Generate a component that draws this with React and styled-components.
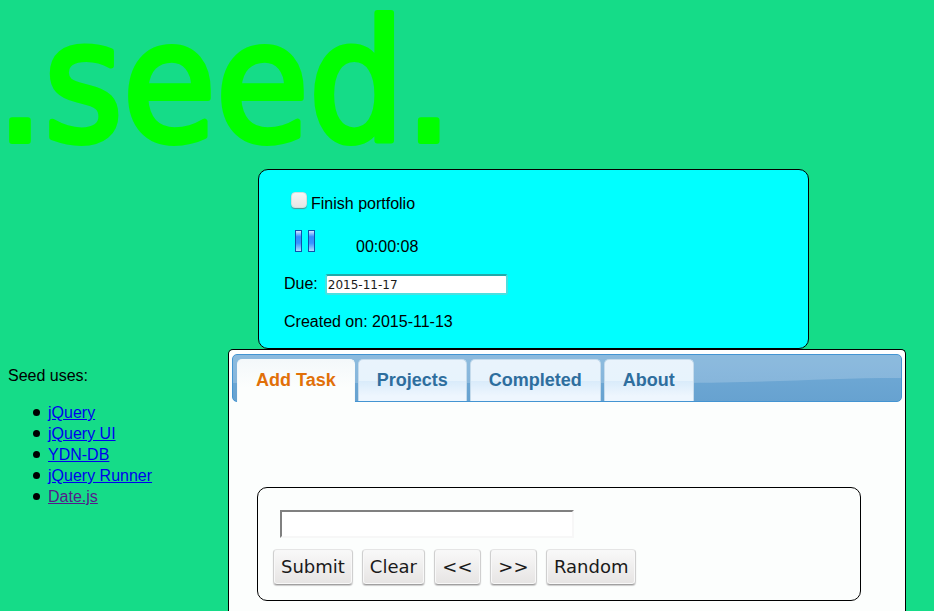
import React, { useState } from 'react';
import styled, { createGlobalStyle } from 'styled-components';

const GlobalStyle = createGlobalStyle`
  *, *::before, *::after { box-sizing: border-box; }
  body {
    margin: 0;
    background: #15dc88;
    color: #000;
    font: 16px/21px "Liberation Sans", Arial, sans-serif;
  }
`;

const Page = styled.div`
  min-height: 100vh;
  padding: 0 28px 0 8px;
  display: grid;
  grid-template-columns: 220px minmax(0, 1fr);
  grid-template-rows: auto auto 1fr;
`;

const Header = styled.header`
  grid-column: 1 / -1;
  height: 169px;
`;

const Logo = styled.svg`
  display: block;
  width: 450px;
  height: 169px;
  overflow: visible;
  fill: #00ff00;
  stroke: #00ff00;
  stroke-width: 6px;
  stroke-linejoin: round;
  font-family: "DejaVu Sans Condensed", "DejaVu Sans", sans-serif;
  font-size: 168px;
`;

const TaskCard = styled.section`
  grid-column: 2;
  margin: 0 97px 0 30px;
  height: 180px;
  padding: 20px 25px 0;
  background: #00ffff;
  border: 1px solid #000;
  border-radius: 10px;
`;

const CheckRow = styled.div`
  display: flex;
  align-items: center;
  gap: 4px;
  height: 26px;
  padding-left: 7px;
`;

const CheckBox = styled.input`
  appearance: none;
  width: 16px;
  height: 16px;
  margin: 0 0 6px;
  background: linear-gradient(#f6f6f6, #e7e5e4);
  border: 1px solid #d5dddd;
  border-radius: 4px;
  box-shadow: 0 1px 1px #5b8f8f;
  &:checked { background: #4a90d9; }
`;

const TimerRow = styled.div`
  display: flex;
  align-items: center;
  gap: 40px;
  height: 32px;
  margin-top: 14px;
  padding-left: 10px;
`;

const PauseButton = styled.button`
  display: flex;
  margin: 0 0 10px;
  padding: 0;
  background: none;
  border: 0;
  cursor: pointer;
`;

const DueRow = styled.div`
  display: flex;
  align-items: center;
  gap: 7px;
  height: 21px;
  margin-top: 11px;
`;

const DueInput = styled.input`
  width: 183px;
  height: 21px;
  margin: 2px 0 0;
  padding: 1px;
  font: 12px "DejaVu Sans", sans-serif;
  color: #1a1a1a;
  background: #fff;
  border: 2px solid #4be0e0;
  border-top-color: #22a9a9;
  border-radius: 3px;
`;

const Created = styled.p`
  margin: 17px 0 0;
`;

const Sidebar = styled.aside`
  grid-column: 1;
  padding-top: 16px;
`;

const SidebarTitle = styled.p`
  margin: 0 0 16px;
`;

const LinkList = styled.ul`
  margin: 0;
  padding: 0 0 0 25px;
  list-style: none;
`;

const LinkItem = styled.li`
  display: flex;
  align-items: center;
  gap: 8px;
  &::before {
    content: "";
    width: 7px;
    height: 7px;
    background: #000;
    border-radius: 50%;
  }
`;

const Link = styled.a`
  color: ${({ $visited }) => ($visited ? '#551a8b' : '#0000ee')};
`;

const Panel = styled.section`
  grid-column: 2;
  display: flex;
  flex-direction: column;
  padding: 4px 3px 0;
  background: linear-gradient(#fff 8px, #fcfefd 8px);
  border: 1px solid #000;
  border-bottom: 0;
  border-radius: 5px 5px 0 0;
`;

const TabBar = styled.div`
  position: relative;
  display: flex;
  gap: 3px;
  height: 48px;
  padding: 4px 4px 0;
  background: linear-gradient(#72abd7, #67a2d0);
  border: 1px solid #4394d2;
  border-radius: 5px;
`;

const Gloss = styled.svg`
  position: absolute;
  inset: 0;
  width: 100%;
  height: 100%;
  border-radius: 4px;
`;

const Tab = styled.button`
  position: relative;
  height: ${({ $active }) => ($active ? '43px' : '42px')};
  padding: ${({ $active }) => ($active ? '0 18px 2px' : '0 18px 1px')};
  color: ${({ $active }) => ($active ? '#e17009' : '#2e6e9e')};
  font: bold 18px "Liberation Sans", Arial, sans-serif;
  background: ${({ $active }) =>
    $active
      ? 'linear-gradient(#f4f8fa, #fcfefd 28px)'
      : 'linear-gradient(#e9f3fc, #e7f3fc 21px, #d9ebfa 21px, #eef6fe 36px)'};
  border: 1px solid ${({ $active }) => ($active ? '#f5f9fa' : '#c5dbec')};
  border-bottom: 0;
  border-radius: 5px 5px 0 0;
  cursor: pointer;
`;

const TaskForm = styled.form`
  margin: 85px 41px 10px 25px;
  height: 114px;
  padding: 22px 15px 0;
  border: 1px solid #000;
  border-radius: 10px;
`;

const TaskInput = styled.input`
  display: block;
  width: 294px;
  max-width: 100%;
  height: 28px;
  margin-left: 7px;
  padding: 2px 4px;
  font: 18px "DejaVu Sans", sans-serif;
  background: #fff;
  border: 2px solid #f7f7f7;
  border-top-color: #808080;
  border-left-color: #808080;
`;

const ButtonRow = styled.div`
  display: flex;
  gap: 9px;
  margin-top: 11px;
`;

const Button = styled.button`
  height: 36px;
  min-width: 47px;
  padding: 0 7px 2px;
  color: #1a1a1a;
  font: 18px "DejaVu Sans", sans-serif;
  background: linear-gradient(#f9f9f9, #e6e4e3);
  border: 1px solid #cfcfcf;
  border-top-color: #e5e5e5;
  border-bottom-color: #a0a0a0;
  border-radius: 4px;
  box-shadow: inset 0 0 0 1px #f8f8f8, 0 1px 1px #cccccc;
  cursor: pointer;
`;

const tabs = ['Add Task', 'Projects', 'Completed', 'About'];
const links = ['jQuery', 'jQuery UI', 'YDN-DB', 'jQuery Runner', 'Date.js'];
const actions = ['Submit', 'Clear', '<<', '>>', 'Random'];

function PauseIcon() {
  return (
    <svg width="22" height="22" viewBox="0 0 22 22" aria-hidden="true">
      <defs>
        <linearGradient id="bar" x1="0" y1="0" x2="0" y2="1">
          <stop offset="0" stopColor="#e4efff" />
          <stop offset="0.3" stopColor="#318cff" />
          <stop offset="0.6" stopColor="#3795ff" />
          <stop offset="1" stopColor="#b5e5ff" />
        </linearGradient>
      </defs>
      <g fill="url(#bar)" stroke="#124fad">
        <rect x="1.5" y="0.5" width="6" height="21" />
        <rect x="14.5" y="0.5" width="6" height="21" />
      </g>
    </svg>
  );
}

export default function App() {
  const [active, setActive] = useState('Add Task');
  return (
    <>
      <GlobalStyle />
      <Page>
        <Header>
          <Logo viewBox="0 0 450 169" role="img" aria-label=".seed.">
            <text x="-12" y="141">.seed.</text>
          </Logo>
        </Header>
        <TaskCard>
          <CheckRow>
            <CheckBox type="checkbox" id="task" />
            <label htmlFor="task">Finish portfolio</label>
          </CheckRow>
          <TimerRow>
            <PauseButton type="button" aria-label="Pause"><PauseIcon /></PauseButton>
            <span>00:00:08</span>
          </TimerRow>
          <DueRow>
            <label htmlFor="due">Due:</label>
            <DueInput id="due" type="text" defaultValue="2015-11-17" />
          </DueRow>
          <Created>Created on: 2015-11-13</Created>
        </TaskCard>
        <Sidebar>
          <SidebarTitle>Seed uses:</SidebarTitle>
          <LinkList>
            {links.map((name) => (
              <LinkItem key={name}><Link href="#" $visited={name === 'Date.js'}>{name}</Link></LinkItem>
            ))}
          </LinkList>
        </Sidebar>
        <Panel>
          <TabBar role="tablist">
            <Gloss viewBox="0 0 668 46" preserveAspectRatio="none" aria-hidden="true">
              <path d="M0 0H668V23C590 23 540 28 440 28H0Z" fill="#fff" fillOpacity="0.19" />
            </Gloss>
            {tabs.map((name) => (
              <Tab
                key={name}
                type="button"
                role="tab"
                aria-selected={active === name}
                $active={active === name}
                onClick={() => setActive(name)}
              >
                {name}
              </Tab>
            ))}
          </TabBar>
          <TaskForm onSubmit={(event) => event.preventDefault()}>
            <TaskInput type="text" aria-label="Task" />
            <ButtonRow>
              {actions.map((name) => (
                <Button key={name} type={name === 'Submit' ? 'submit' : name === 'Clear' ? 'reset' : 'button'}>
                  {name}
                </Button>
              ))}
            </ButtonRow>
          </TaskForm>
        </Panel>
      </Page>
    </>
  );
}
